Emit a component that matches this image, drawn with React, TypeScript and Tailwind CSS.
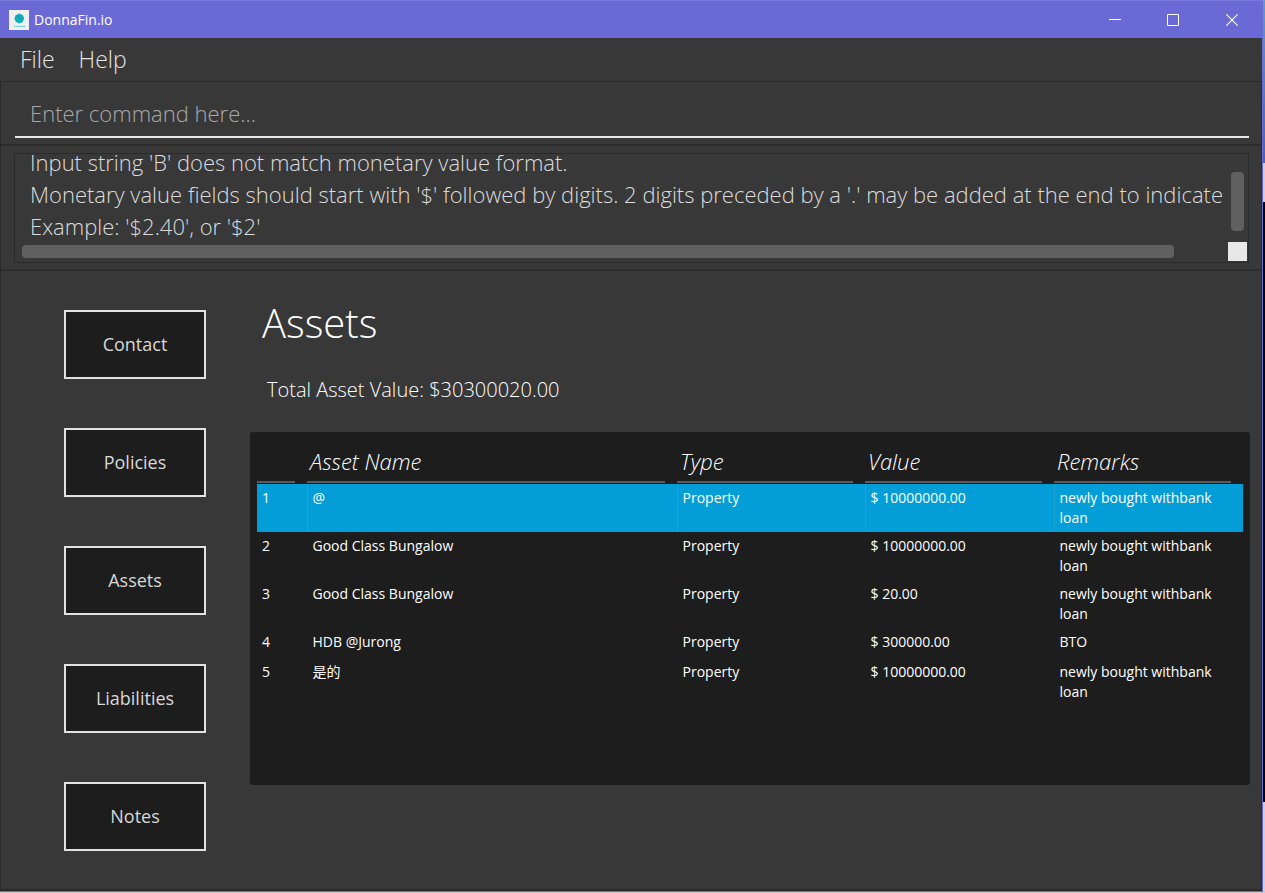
import { useState } from "react";

type Asset = { name: string; type: string; value: string; remarks: string };

const tabs = ["Contact", "Policies", "Assets", "Liabilities", "Notes"];

const assets: Asset[] = [
  { name: "@", type: "Property", value: "$ 10000000.00", remarks: "newly bought withbank loan" },
  { name: "Good Class Bungalow", type: "Property", value: "$ 10000000.00", remarks: "newly bought withbank loan" },
  { name: "Good Class Bungalow", type: "Property", value: "$ 20.00", remarks: "newly bought withbank loan" },
  { name: "HDB @Jurong", type: "Property", value: "$ 300000.00", remarks: "BTO" },
  { name: "是的", type: "Property", value: "$ 10000000.00", remarks: "newly bought withbank loan" },
];

const message = [
  "Input string 'B' does not match monetary value format.",
  "Monetary value fields should start with '$' followed by digits. 2 digits preceded by a '.' may be added at the end to indicate cents.",
  "Example: '$2.40', or '$2'",
].join("\n");

function Logo() {
  return (
    <svg viewBox="0 0 20 20" className="size-5" aria-hidden="true">
      <rect width="20" height="20" fill="#f0f0f0" />
      <path d="M10.3 3.4 14 5.2 15.2 8.6 13.7 11.9 10.3 13.6 6.9 11.9 5.4 8.6 6.6 5.2Z" fill="#10b0b8" />
      <path d="M10.3 3.6 9.3 7l4.3 4.8M6.6 5.4l4.7 2.8 3.7.4M7 11.8 9.3 7" fill="none" stroke="#0a949e" strokeWidth=".4" />
      <path d="M5 16.5h11" stroke="#74cdd0" strokeWidth="1.4" strokeDasharray="1.6 .4" />
    </svg>
  );
}

function TitleBar() {
  return (
    <header className="flex h-[38px] items-center justify-between border-t border-[#7a78da] bg-[#6b69d6] pl-[9px] text-white">
      <div className="flex items-center gap-[5px]">
        <Logo />
        <span className="text-sm">DonnaFin.io</span>
      </div>
      <div className="flex h-full">
        <button aria-label="Minimize" className="grid w-[58px] place-items-center">
          <svg className="size-3" viewBox="0 0 12 12"><path d="M0 5.5h12" stroke="white" /></svg>
        </button>
        <button aria-label="Maximize" className="grid w-[58px] place-items-center">
          <svg className="size-3" viewBox="0 0 12 12"><path d="M.5.5h11v11H.5z" fill="none" stroke="white" /></svg>
        </button>
        <button aria-label="Close" className="grid w-[60px] place-items-center">
          <svg className="size-3" viewBox="0 0 12 12"><path d="m.3.3 11.4 11.4m0-11.4L.3 11.7" stroke="white" strokeWidth="1.1" /></svg>
        </button>
      </div>
    </header>
  );
}

function ResultDisplay() {
  return (
    <section className="border-y-2 border-[#2c2c2c] pt-[7px] pr-3 pb-[6px] pl-[13px]">
      <div className="grid h-[110px] grid-cols-[1fr_20px] grid-rows-[1fr_20px] border border-[#2a2a2a]">
        <div className="h-[88px] overflow-hidden">
          <textarea
            readOnly
            aria-label="Result"
            wrap="off"
            value={message}
            className="-mt-2 block h-24 w-full resize-none overflow-hidden pl-[15px] text-[22px] leading-8 text-[#dcdcdc] outline-none"
          />
        </div>
        <div className="pt-[18px] pl-[3px]">
          <div className="h-[59px] w-[13px] rounded bg-[#606060]" />
        </div>
        <div className="pt-[3px] pr-[54px] pl-[7px]">
          <div className="h-[13px] rounded bg-[#606060]" />
        </div>
        <div className="size-[19px] bg-[#e8e8e8]" />
      </div>
    </section>
  );
}

function AssetTable() {
  const [selected, setSelected] = useState(0);
  return (
    <div className="min-h-[353px] rounded-[3px] bg-[#1d1d1d] px-[7px] pt-2">
      <table className="w-full table-fixed border-collapse text-left text-sm leading-5 font-normal text-white">
        <colgroup>
          <col className="w-[50px]" />
          <col />
          <col className="w-[188px]" />
          <col className="w-[189px]" />
          <col className="w-[189px]" />
        </colgroup>
        <thead>
          <tr className="text-[22px] leading-8 italic">
            {["", "Asset Name", "Type", "Value", "Remarks"].map((h) => (
              <th key={h} className="h-11 p-0 pr-3 align-top font-light">
                <div className="h-[43px] border-b-2 border-[#5c5c5c] pt-[5px] pl-[3px]">{h}</div>
              </th>
            ))}
          </tr>
        </thead>
        <tbody>
          {assets.map((a, i) => (
            <tr
              key={i}
              onClick={() => setSelected(i)}
              className={i === selected ? "h-[30px] bg-[#039ed7] align-top" : "h-[30px] align-top"}
            >
              <td className="px-[5px] py-1">{i + 1}</td>
              {[a.name, a.type, a.value, a.remarks].map((v, j) => (
                <td
                  key={j}
                  className={
                    i === selected
                      ? "border-l border-[#1fa3d2] px-[5px] py-1"
                      : "border-l border-transparent px-[5px] py-1"
                  }
                >
                  {v}
                </td>
              ))}
            </tr>
          ))}
        </tbody>
      </table>
    </div>
  );
}

export default function App() {
  return (
    <div className="flex min-h-screen flex-col bg-[#c8c8cc] pb-px font-['Open_Sans','Noto_Sans_CJK_SC',sans-serif]">
      <div className="flex flex-1">
        <div className="flex min-w-0 flex-1 flex-col border-r border-b border-[#6b69d6] bg-[#383838]">
          <TitleBar />
          <nav className="flex h-[43px] items-center gap-6 px-5 text-[23px] font-light text-[#e4e4e4]">
            <button>File</button>
            <button>Help</button>
          </nav>
          <main className="flex flex-1 flex-col border border-b-2 border-[#2a2a2a] font-light">
            <div className="pt-[10px] pr-3 pb-[6px] pl-[14px]">
              <input
                aria-label="Command"
                placeholder="Enter command here..."
                className="block h-[46px] w-full border-b-2 border-[#e8e8e8] px-[15px] pb-[2px] text-[22px] text-white outline-none placeholder:text-[#a8a8a8]"
              />
            </div>
            <ResultDisplay />
            <div className="flex flex-1">
              <nav className="flex flex-col gap-[49px] pt-[39px] pr-11 pl-[63px]">
                {tabs.map((t) => (
                  <button
                    key={t}
                    className="h-[69px] w-[142px] border-2 border-[#e2e2e2] bg-[#1d1d1d] pb-[2px] text-lg font-normal text-[#d8d8d8]"
                  >
                    {t}
                  </button>
                ))}
              </nav>
              <section className="min-w-0 flex-1 pt-6 pr-[11px] text-white">
                <h1 className="pl-3 text-[40px] leading-[56px]">Assets</h1>
                <p className="mt-[25px] mb-7 pl-[17px] text-xl">Total Asset Value: $30300020.00</p>
                <AssetTable />
              </section>
            </div>
          </main>
        </div>
        <div className="flex w-[2px] flex-col">
          <div className="h-[163px] bg-linear-to-b from-[#5aa0c0] to-[#4a62a8]" />
          <div className="h-[39px] bg-[#d6cccc]" />
          <div className="h-[600px] bg-black" />
          <div className="flex-1 bg-[#d0d0d0]" />
        </div>
      </div>
    </div>
  );
}
